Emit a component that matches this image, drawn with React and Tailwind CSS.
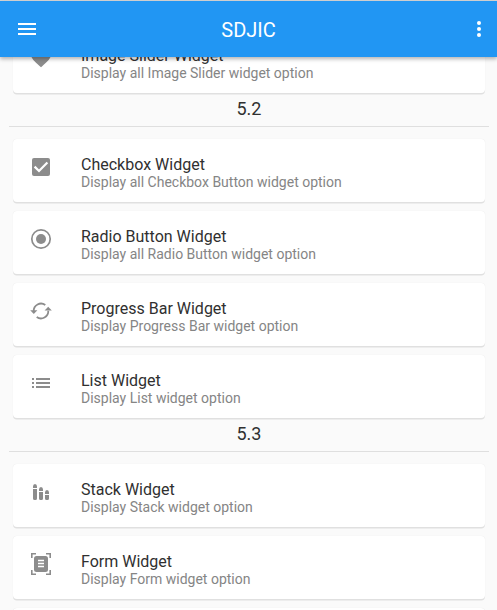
const HeartIcon = () => (
  <path d="M12 21.35l-1.45-1.32C5.4 15.36 2 12.28 2 8.5 2 5.42 4.42 3 7.5 3c1.74 0 3.41.81 4.5 2.09C13.09 3.81 14.76 3 16.5 3 19.58 3 22 5.42 22 8.5c0 3.78-3.4 6.86-8.55 11.54L12 21.35z" />
);

const CheckboxIcon = () => (
  <>
    <rect x="3" y="3" width="18" height="18" rx="2" />
    <path d="M5.6 11.6L10 16L18.4 7.4" fill="none" stroke="white" strokeWidth="2.2" />
  </>
);

const RadioIcon = () => (
  <>
    <circle cx="12" cy="12" r="9.2" fill="none" stroke="currentColor" strokeWidth="1.7" />
    <circle cx="12" cy="12" r="5" />
  </>
);

const RefreshIcon = () => (
  <>
    <path d="M4.7 12.2A7.3 7.3 0 0 1 16.3 6" fill="none" stroke="currentColor" strokeWidth="1.8" />
    <path d="M19.3 11.8A7.3 7.3 0 0 1 7.7 18" fill="none" stroke="currentColor" strokeWidth="1.8" />
    <path d="M1.2 11.2H8.4L4.8 15z" />
    <path d="M22.8 11.6H15.6L19.2 7.7z" />
  </>
);

const ListIcon = () => (
  <path d="M3 7h2v2H3zM7 7h14v2H7zM3 11h2v2H3zM7 11h14v2H7zM3 15h2v2H3zM7 15h14v2H7z" />
);

const StackIcon = () => (
  <>
    <path d="M4 8V6.500a2 2.500 0 0 1 4 0V8zM10 11V9.500a2 2.500 0 0 1 4 0V11zM16 14v-1.500a2 2.500 0 0 1 4 0V14z" />
    <path d="M4 9h4v9.500a1.500 1.500 0 0 1-1.500 1.500h-1A1.500 1.500 0 0 1 4 18.500zM10 12h4v6.500a1.500 1.500 0 0 1-1.500 1.500h-1a1.500 1.500 0 0 1-1.500-1.500zM16 15h4v3.500a1.500 1.500 0 0 1-1.500 1.500h-1a1.500 1.500 0 0 1-1.500-1.500z" />
  </>
);

const FormIcon = () => (
  <>
    <path d="M2.800 6V1.800H7M17 1.800h4.200V6M21.200 18v4.200H17M7 22.200H2.800V18" fill="none" stroke="currentColor" strokeWidth="1.600" />
    <rect x="5" y="4" width="14" height="16" rx="2.500" />
    <path d="M9 8.500h6M9 11.500h6M9 14.500h6" stroke="white" strokeWidth="1.500" />
  </>
);

const groups = [
  {
    items: [
      { title: "Image Slider Widget", text: "Display all Image Slider widget option", Icon: HeartIcon },
    ],
  },
  {
    label: "5.2",
    items: [
      { title: "Checkbox Widget", text: "Display all Checkbox Button widget option", Icon: CheckboxIcon },
      { title: "Radio Button Widget", text: "Display all Radio Button widget option", Icon: RadioIcon },
      { title: "Progress Bar Widget", text: "Display Progress Bar widget option", Icon: RefreshIcon },
      { title: "List Widget", text: "Display List widget option", Icon: ListIcon },
    ],
  },
  {
    label: "5.3",
    items: [
      { title: "Stack Widget", text: "Display Stack widget option", Icon: StackIcon },
      { title: "Form Widget", text: "Display Form widget option", Icon: FormIcon },
      { title: "", text: "", Icon: null },
    ],
  },
];

function Card({ title, text, Icon }) {
  return (
    <li className="mx-1 mb-px flex h-[63px] shrink-0 rounded bg-white px-4 pt-4 shadow-[0_1.5px_0.5px_#e0e0e0,0_0_1px_rgba(0,0,0,0.1)]">
      <svg viewBox="0 0 24 24" className="size-6 shrink-0 text-[#8c8c8c]" fill="currentColor">
        {Icon && <Icon />}
      </svg>
      <div className="ml-7 whitespace-nowrap">
        <h2 className="text-base leading-[19px] text-[#303030]">{title}</h2>
        <p className="text-sm leading-4 text-[#858585]">{text}</p>
      </div>
    </li>
  );
}

export default function App() {
  return (
    <div className="flex h-[610px] w-[497px] flex-col overflow-hidden bg-[#fafafa] font-['Roboto',sans-serif]">
      <header className="z-10 mt-px flex h-14 shrink-0 items-center bg-[#2196f3] pl-[15px] pr-[6px] text-white shadow-[0_2px_4px_rgba(0,0,0,0.3),0_-1px_0_#d6d6d6]">
        <svg viewBox="0 0 24 24" className="size-6" fill="currentColor">
          <path d="M3 18h18v-2H3v2zm0-5h18v-2H3v2zm0-7v2h18V6H3z" />
        </svg>
        <h1 className="flex-1 pr-[9px] pt-0.5 text-center text-xl">SDJIC</h1>
        <svg viewBox="0 0 24 24" className="size-6" fill="currentColor">
          <circle cx="12" cy="6" r="2" />
          <circle cx="12" cy="12" r="2" />
          <circle cx="12" cy="18" r="2" />
        </svg>
      </header>
      <main className="-mt-[27px] flex-1 overflow-hidden pl-[9px] pr-2">
        {groups.map(({ label, items }, i) => (
          <section key={i}>
            {label && (
              <div className="flex h-[45px] flex-col pt-1">
                <h3 className="text-center text-lg leading-[22px] text-[#303030]">{label}</h3>
                <hr className="mt-1.5 border-[#dfdfdf]" />
              </div>
            )}
            <ul className="flex flex-col gap-2">
              {items.map((item, n) => (
                <Card key={n} {...item} />
              ))}
            </ul>
          </section>
        ))}
      </main>
    </div>
  );
}
